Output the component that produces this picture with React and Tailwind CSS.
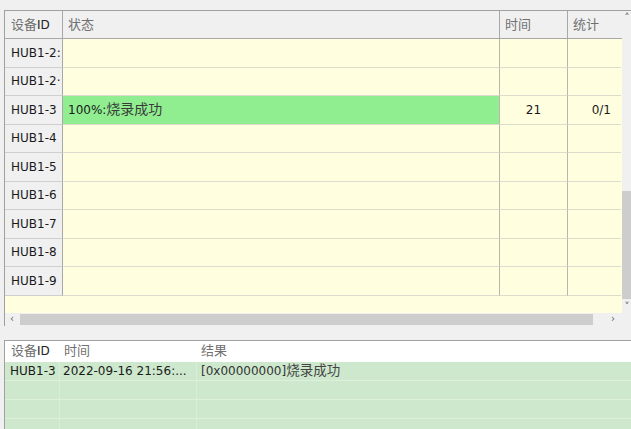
import React from 'react';

const rows = ['HUB1-2:', 'HUB1-2·', 'HUB1-3', 'HUB1-4', 'HUB1-5', 'HUB1-6', 'HUB1-7', 'HUB1-8', 'HUB1-9'];

const sans = { fontFamily: '"DejaVu Sans", "Noto Sans CJK SC", sans-serif' };

function DeviceRow({ id }) {
  const done = id === 'HUB1-3';
  return (
    <div className="flex h-[28.5px] text-[12px] text-[#1a1a1a]">
      <div className="flex w-[58px] shrink-0 items-center overflow-hidden whitespace-nowrap border-r border-b border-r-[#a8a8a8] border-b-[#cfcfcf] bg-[#f0f0f0] pl-[6px]">
        {id}
      </div>
      <div
        className={
          'flex w-[436px] shrink-0 items-center border-b border-[#dcdccc] pl-[5px] ' +
          (done ? 'bg-[#90ee90]' : '')
        }
      >
        {done && (
          <span>
            100%:<span className="text-[14px] text-[#3a3a3a]">烧录成功</span>
          </span>
        )}
      </div>
      <div className="flex w-[68px] shrink-0 items-center justify-center border-l border-b border-l-[#b8b8a8] border-b-[#dcdccc]">
        {done && '21'}
      </div>
      <div className="flex w-[54px] shrink-0 items-center justify-end border-l border-b border-l-[#b8b8a8] border-b-[#dcdccc] pr-[10px]">
        {done && '0/1'}
      </div>
    </div>
  );
}

export default function App() {
  return (
    <div className="flex h-[429px] w-[631px] flex-col overflow-hidden bg-[#f0f0f0]" style={sans}>
      <div className="h-[10px] shrink-0" />

      {/* Device grid */}
      <div className="ml-[4px] flex shrink-0 border-t border-l border-[#a0a0a0]">
        <div className="flex w-[617px] shrink-0 flex-col">
          <div className="flex h-[28px] border-b border-[#a8a8a8] bg-[#f0f0f0] text-[13px] text-[#707070]">
            <div className="flex w-[58px] shrink-0 items-center border-r border-[#a8a8a8] pl-[6px]">
              设备<span className="text-[12px] text-[#222]">ID</span>
            </div>
            <div className="flex w-[436px] shrink-0 items-center pl-[5px]">状态</div>
            <div className="flex w-[68px] shrink-0 items-center border-l border-[#a8a8a8] pl-[5px]">时间</div>
            <div className="flex w-[54px] shrink-0 items-center border-l border-[#a8a8a8] pl-[5px]">统计</div>
          </div>
          <div className="bg-[#ffffe0]">
            {rows.map((id) => (
              <DeviceRow key={id} id={id} />
            ))}
            <div className="h-[17px]" />
          </div>
          <div className="flex h-[13px] items-center bg-[#f0f0f0] text-[10px] text-[#606060]">
            <span className="w-[15px] pl-[5px] leading-none">‹</span>
            <div className="h-[11px] w-[573px] bg-[#cdcdcd]" />
            <span className="pl-[18px] leading-none">›</span>
          </div>
        </div>
        <div className="flex w-[10px] shrink-0 flex-col items-center bg-[#f0f0f0] text-[10px] text-[#606060]">
          <span className="mt-[2px] h-[14px] leading-none">˄</span>
          <div className="mt-[164px] h-[108px] w-full bg-[#cdcdcd]" />
          <span className="mt-[3px] leading-none">˅</span>
        </div>
      </div>

      <div className="h-[14px] shrink-0" />

      {/* Log list */}
      <div className="ml-[4px] flex flex-1 flex-col border-t border-l border-[#a0a0a0] bg-white text-[12px]">
        <div className="flex h-[21px] shrink-0 items-center text-[13px] text-[#707070]">
          <div className="w-[55px] shrink-0 pl-[6px]">
            设备<span className="text-[12px] text-[#222]">ID</span>
          </div>
          <div className="w-[137px] shrink-0 pl-[4px]">时间</div>
          <div className="pl-[4px]">结果</div>
        </div>
        <div className="flex-1 bg-[#cde8cd]">
          <div className="flex h-[19px] items-center border-b border-[#dcf0dc] text-[#1a1a1a]">
            <div className="h-full w-[55px] shrink-0 border-r border-[#d8eed8] pl-[5px] leading-[19px]">HUB1-3</div>
            <div className="h-full w-[137px] shrink-0 border-r border-[#d8eed8] pl-[3px] leading-[19px]">2022-09-16 21:56:...</div>
            <div className="pl-[4px] leading-[19px] text-[#333]">
              [0x00000000]<span className="text-[13.5px] text-[#444]">烧录成功</span>
            </div>
          </div>
          {[0, 1, 2].map((i) => (
            <div key={i} className="flex h-[19px] border-b border-[#dcf0dc]">
              <div className="w-[55px] shrink-0 border-r border-[#d8eed8]" />
              <div className="w-[137px] shrink-0 border-r border-[#d8eed8]" />
            </div>
          ))}
        </div>
      </div>
    </div>
  );
}
